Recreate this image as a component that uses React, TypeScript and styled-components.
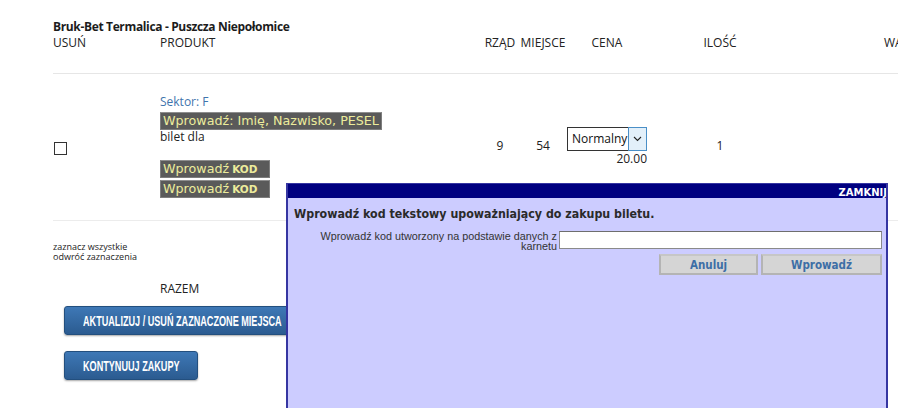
import React from "react";
import styled, { createGlobalStyle } from "styled-components";

const GlobalStyle = createGlobalStyle`
  html, body {
    margin: 0;
    padding: 0;
    background: #fff;
  }
  body {
    font-family: "Open Sans", "Liberation Sans", sans-serif;
    color: #222;
  }
`;

const columns = "107px 320px 40px 46px 82px 144px 240px";

const Page = styled.div`
  position: relative;
  width: 898px;
  height: 408px;
  overflow: hidden;
  background: #fff;
`;

const Cart = styled.div`
  margin-left: 53px;
  padding-top: 19px;
  width: 979px;
`;

const MatchTitle = styled.div`
  font-weight: 700;
  font-size: 12px;
  line-height: 16px;
  color: #1c1c1c;
  letter-spacing: -0.35px;
`;

const Row = styled.div`
  display: grid;
  grid-template-columns: ${columns};
  align-items: center;
`;

const HeadRow = styled(Row)`
  align-items: start;
  padding-bottom: 22px;
  border-bottom: 1px solid #e6e6e6;
`;

const HeadCell = styled.div<{ $center?: boolean }>`
  font-size: 12px;
  line-height: 16px;
  color: #222;
  text-align: ${(p) => (p.$center ? "center" : "left")};
  white-space: nowrap;
`;

const BodyRow = styled(Row)`
  padding: 20px 0 22px;
  border-bottom: 1px solid #ececec;
`;

const Cell = styled.div<{ $center?: boolean }>`
  font-size: 12px;
  line-height: 16px;
  text-align: ${(p) => (p.$center ? "center" : "left")};
`;

const Check = styled.input`
  appearance: none;
  display: block;
  margin: 4px 0 0 1px;
  width: 13px;
  height: 13px;
  box-sizing: border-box;
  border: 1px solid #333;
  background: #fff;
`;

const Sector = styled.div`
  color: #3f74ad;
  font-size: 12px;
  line-height: 16px;
`;

const DarkButton = styled.button<{ $w: number; $gap: number }>`
  display: flex;
  align-items: center;
  gap: 3px;
  box-sizing: border-box;
  width: ${(p) => p.$w}px;
  height: 18px;
  margin-top: ${(p) => p.$gap}px;
  padding: 0 2px;
  background: #5a5a5a;
  border: 1px solid #7d7d7d;
  border-top-color: #8e8e8e;
  color: #ecec9c;
  font-family: "DejaVu Sans", Verdana, sans-serif;
  font-size: 12.7px;
  line-height: 16px;
  white-space: nowrap;
  cursor: pointer;

  b {
    font-size: 10.5px;
    font-weight: 700;
  }
`;

const Note = styled.div`
  font-size: 12px;
  line-height: 14px;
  color: #222;
`;

const PriceCell = styled.div`
  display: flex;
  flex-direction: column;
  align-items: flex-end;
  padding-right: 1px;
`;

const Select = styled.div`
  display: flex;
  box-sizing: border-box;
  width: 80px;
  height: 24px;
  border: 1px solid #333;
  background: #fff;
`;

const SelectValue = styled.span`
  flex: 1;
  padding-left: 4px;
  font-size: 12px;
  line-height: 21px;
  color: #111;
`;

const SelectArrow = styled.span`
  display: flex;
  align-items: center;
  justify-content: center;
  width: 17px;
  margin: -1px -1px -1px 0;
  border: 1px solid #4a8fc7;
  background: #e3f0fa;
`;

const Price = styled.div`
  font-size: 12px;
  line-height: 15px;
  color: #222;
`;

const Footer = styled.div`
  margin-left: 53px;
`;

const Links = styled.div`
  padding-top: 21px;
  font-size: 9px;
  line-height: 10px;
  color: #222;
`;

const Summary = styled.div`
  margin: 19px 0 0 107px;
  font-size: 12px;
  line-height: 16px;
  color: #222;
`;

const ActionButton = styled.button<{ $gap: number; $w: number }>`
  display: block;
  box-sizing: border-box;
  width: ${(p) => p.$w}px;
  height: 29px;
  margin: ${(p) => p.$gap}px 0 0 11px;
  padding: 0 0 0 18px;
  border: 1px solid #234f7e;
  border-radius: 3px;
  background: linear-gradient(#3e78b6, #2b5b90);
  box-shadow: 0 1px 2px rgba(0, 0, 0, 0.35);
  text-align: left;
  white-space: nowrap;
  cursor: pointer;
`;

const ActionLabel = styled.span`
  display: inline-block;
  transform: scaleX(0.65);
  transform-origin: left center;
  color: #fff;
  font-family: "Liberation Sans", "Open Sans", sans-serif;
  font-weight: 700;
  font-size: 14px;
`;

const Dialog = styled.div`
  position: absolute;
  left: 286px;
  top: 183px;
  z-index: 2;
  box-sizing: border-box;
  width: 602px;
  height: 240px;
  border: 2px solid #3636a2;
  border-top-width: 1px;
  background: #ccccff;
`;

const TitleBar = styled.div`
  display: flex;
  justify-content: flex-end;
  align-items: flex-end;
  height: 14px;
  overflow: hidden;
  background: #000080;
`;

const Close = styled.span`
  margin-right: -1px;
  color: #fff;
  font-family: "DejaVu Sans", Verdana, sans-serif;
  font-weight: 700;
  font-size: 10px;
  line-height: 11px;
  cursor: pointer;
`;

const DialogHeading = styled.div`
  padding: 9px 6px 0;
  font-family: "DejaVu Sans Condensed", "DejaVu Sans", Verdana, sans-serif;
  font-weight: 700;
  font-size: 12.3px;
  line-height: 14px;
  color: #2a2a2a;
`;

const Form = styled.div`
  display: grid;
  grid-template-columns: 269px 323px;
  column-gap: 2px;
  row-gap: 3px;
  margin-top: 10px;
`;

const FieldLabel = styled.label`
  align-self: center;
  padding-left: 26px;
  text-align: right;
  font-family: "Liberation Sans", sans-serif;
  font-size: 10.8px;
  line-height: 10px;
  color: #333;
`;

const CodeInput = styled.input`
  box-sizing: border-box;
  width: 323px;
  height: 18px;
  margin: 0;
  border: 1px solid #8a8a8a;
  border-top-color: #6e6e6e;
  background: #fff;
`;

const FormButtons = styled.div`
  grid-column: 2;
  display: flex;
  justify-content: flex-end;
  gap: 3px;
`;

const FormButton = styled.button<{ $w: number }>`
  box-sizing: border-box;
  width: ${(p) => p.$w}px;
  height: 21px;
  padding: 0;
  border: 2px solid #b4b4b4;
  border-top-color: #c6c6c6;
  background: #d5d5d5;
  color: #3d6ea6;
  font-family: "DejaVu Sans Condensed", "DejaVu Sans", sans-serif;
  font-weight: 700;
  font-size: 11.5px;
  cursor: pointer;
`;

const Chevron = () => (
  <svg width="9" height="6" viewBox="0 0 9 6">
    <path d="M1 1 L4.5 4.5 L8 1" fill="none" stroke="#222" strokeWidth="1.1" />
  </svg>
);

const App = () => {
  return (
    <Page>
      <GlobalStyle />
      <Cart>
        <MatchTitle>Bruk-Bet Termalica - Puszcza Niepołomice</MatchTitle>
        <HeadRow>
          <HeadCell>USUŃ</HeadCell>
          <HeadCell>PRODUKT</HeadCell>
          <HeadCell $center>RZĄD</HeadCell>
          <HeadCell $center>MIEJSCE</HeadCell>
          <HeadCell $center>CENA</HeadCell>
          <HeadCell $center>ILOŚĆ</HeadCell>
          <HeadCell $center>WARTOŚĆ</HeadCell>
        </HeadRow>
        <BodyRow>
          <Cell>
            <Check type="checkbox" />
          </Cell>
          <Cell>
            <Sector>Sektor: F</Sector>
            <DarkButton $w={222} $gap={2}>Wprowadź: Imię, Nazwisko, PESEL</DarkButton>
            <Note>bilet dla</Note>
            <DarkButton $w={110} $gap={16}>
              Wprowadź <b>KOD</b>
            </DarkButton>
            <DarkButton $w={110} $gap={2}>
              Wprowadź <b>KOD</b>
            </DarkButton>
          </Cell>
          <Cell $center>9</Cell>
          <Cell $center>54</Cell>
          <PriceCell>
            <Select>
              <SelectValue>Normalny</SelectValue>
              <SelectArrow>
                <Chevron />
              </SelectArrow>
            </Select>
            <Price>20.00</Price>
          </PriceCell>
          <Cell $center>1</Cell>
          <Cell $center></Cell>
        </BodyRow>
      </Cart>
      <Footer>
        <Links>
          <div>zaznacz wszystkie</div>
          <div>odwróć zaznaczenia</div>
        </Links>
        <Summary>RAZEM</Summary>
        <ActionButton $gap={9} $w={250}>
          <ActionLabel>AKTUALIZUJ / USUŃ ZAZNACZONE MIEJSCA</ActionLabel>
        </ActionButton>
        <ActionButton $gap={16} $w={134}>
          <ActionLabel>KONTYNUUJ ZAKUPY</ActionLabel>
        </ActionButton>
      </Footer>
      <Dialog>
        <TitleBar>
          <Close>ZAMKNIJ</Close>
        </TitleBar>
        <DialogHeading>Wprowadź kod tekstowy upoważniający do zakupu biletu.</DialogHeading>
        <Form>
          <FieldLabel>Wprowadź kod utworzony na podstawie danych z karnetu</FieldLabel>
          <CodeInput type="text" />
          <FormButtons>
            <FormButton $w={99}>Anuluj</FormButton>
            <FormButton $w={121}>Wprowadź</FormButton>
          </FormButtons>
        </Form>
      </Dialog>
    </Page>
  );
};

export default App;
